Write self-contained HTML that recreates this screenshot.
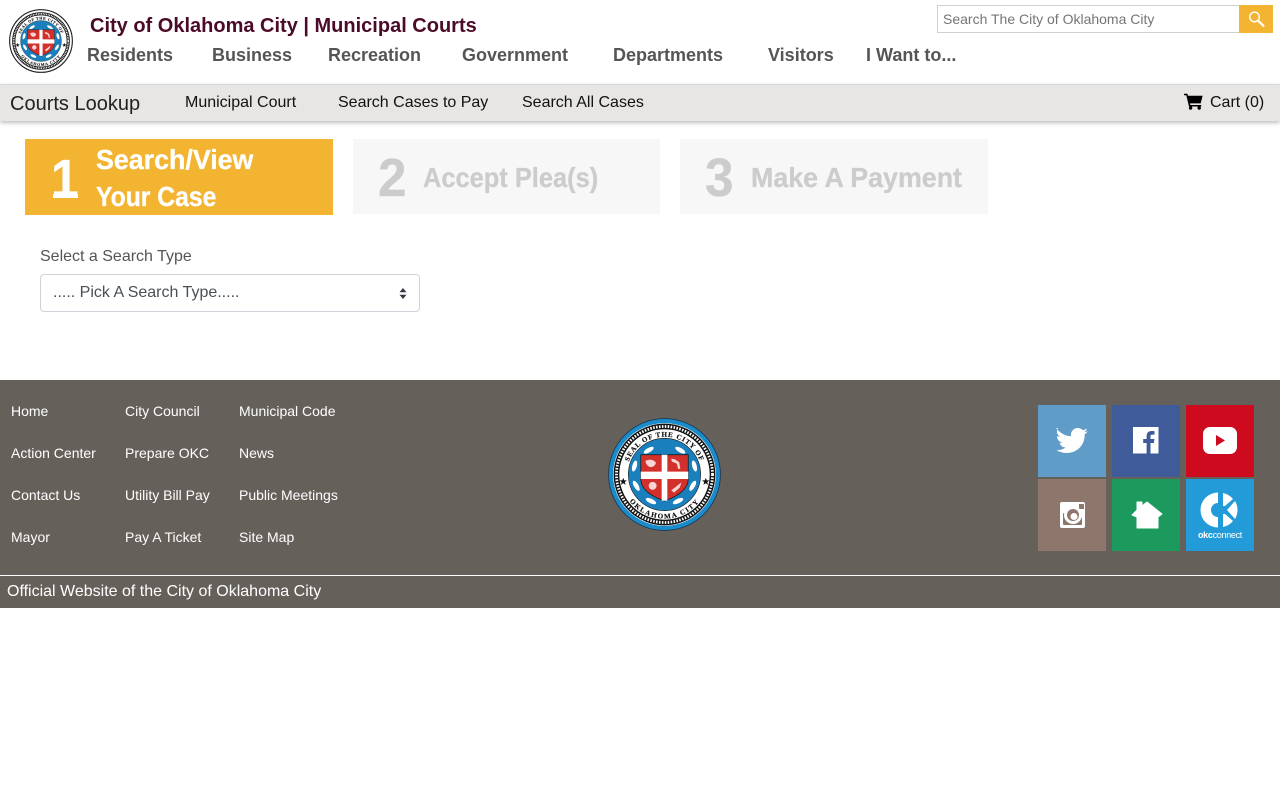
<!DOCTYPE html>
<html><head><meta charset="utf-8"><title>Municipal Courts</title>
<style>
html,body{margin:0;padding:0;background:#fff;width:1280px;height:800px;overflow:hidden;font-family:"Liberation Sans",Arial,sans-serif}
.a{position:absolute;white-space:nowrap}
.nav{top:44px;font-size:18px;font-weight:bold;color:#555;line-height:22px}
.sub{top:93px;font-size:16px;color:#111;line-height:19px}
.f{font-size:14px;color:#fff;line-height:16px}
.st{font-family:"Liberation Sans",sans-serif;font-weight:bold;transform-origin:0 0;-webkit-text-stroke:.3px currentColor}
.tile{position:absolute;width:68px;height:72px}
</style></head><body>
<svg width="0" height="0" style="position:absolute"><defs>
<g id="seal">
<circle cx="100" cy="100" r="91" fill="#fff"/>
<circle cx="100" cy="100" r="85" fill="none" stroke="#111" stroke-width="10"/>
<circle cx="100" cy="100" r="85" fill="none" stroke="#fff" stroke-width="5" stroke-dasharray="2.800 2.400"/>
<circle cx="100" cy="100" r="64" fill="#1a7fbd" stroke="#111" stroke-width="1"/>
<path id="sealTop" d="M33 100A67 67 0 0 1 167 100" fill="none"/>
<path id="sealBot" d="M22 100A78 78 0 0 0 178 100" fill="none"/>
<text font-family="Liberation Serif,serif" font-weight="bold" font-size="12.500" fill="#111" letter-spacing="1.500" stroke="#111" stroke-width=".3"><textPath href="#sealTop" startOffset="50%" text-anchor="middle">SEAL OF THE CITY OF</textPath></text>
<text font-family="Liberation Serif,serif" font-weight="bold" font-size="12.500" fill="#111" letter-spacing="2.500" stroke="#111" stroke-width=".3"><textPath href="#sealBot" startOffset="50%" text-anchor="middle">OKLAHOMA CITY</textPath></text>
<path d="M27 106l1.800 4.500h4.700l-3.800 3 1.500 4.800-4.200-2.800-4.200 2.800 1.500-4.800-3.800-3h4.700zM173 106l1.800 4.500h4.700l-3.800 3 1.500 4.800-4.200-2.800-4.200 2.800 1.500-4.800-3.800-3h4.700z" fill="#111"/>
<g fill="#fff"><ellipse cx="72" cy="57" rx="10" ry="4" transform="rotate(-30 72 57)"/><ellipse cx="128" cy="57" rx="10" ry="4" transform="rotate(30 128 57)"/><ellipse cx="47" cy="85" rx="10" ry="4" transform="rotate(-75 47 85)"/><ellipse cx="153" cy="85" rx="10" ry="4" transform="rotate(75 153 85)"/><ellipse cx="50" cy="120" rx="10" ry="4" transform="rotate(60 50 120)"/><ellipse cx="150" cy="120" rx="10" ry="4" transform="rotate(-60 150 120)"/><ellipse cx="76" cy="147" rx="10" ry="4" transform="rotate(25 76 147)"/><ellipse cx="124" cy="147" rx="10" ry="4" transform="rotate(-25 124 147)"/></g>
<path d="M58 65H142V108Q142 132 100 147Q58 132 58 108Z" fill="#d2302a" stroke="#111" stroke-width="1.200"/>
<path d="M95 65h10v30h37v13h-37v38.500h-10V108H58V95h37z" fill="#fff"/>
<path d="M66 76q11-6 19 3q-2 8-10 8q-7-2-9-11zM112 72l6 1 8 5 2 12h-4l-2-9-9-4zM72 120a7 7 0 1 0 14 0a7 7 0 1 0-14 0zM112 128l18-14-3 9-10 9z" fill="#fff" opacity=".8"/>
</g></defs></svg>

<!-- header -->
<svg class="a" style="left:9px;top:9px" width="64" height="64" viewBox="0 0 200 200"><circle cx="100" cy="100" r="98" fill="#fff" stroke="#222" stroke-width="3.500"/><use href="#seal"/></svg>
<div class="a" style="left:90px;top:14px;font-size:20px;font-weight:bold;color:#4b0a28;line-height:24px">City of Oklahoma City | Municipal Courts</div>
<div class="a nav" style="left:87px">Residents</div>
<div class="a nav" style="left:212px">Business</div>
<div class="a nav" style="left:328px">Recreation</div>
<div class="a nav" style="left:462px">Government</div>
<div class="a nav" style="left:613px">Departments</div>
<div class="a nav" style="left:768px">Visitors</div>
<div class="a nav" style="left:866px">I Want to...</div>

<div class="a" style="left:937px;top:5px;width:301px;height:26px;border:1px solid #d0d0d0;border-right:0;background:#fff"></div>
<div class="a" style="left:943px;top:11px;font-size:14px;line-height:16px;color:#757575">Search The City of Oklahoma City</div>
<div class="a" style="left:1239px;top:5px;width:34px;height:28px;background:#f3b431">
<svg width="34" height="28" viewBox="0 0 34 28"><circle cx="15.500" cy="12" r="4.800" fill="none" stroke="#fff" stroke-width="1.400"/><path d="M19.200 15.800l5.300 5" stroke="#fff" stroke-width="2.200" stroke-linecap="round"/></svg></div>

<!-- subnav -->
<div class="a" style="left:0;top:84px;width:1280px;height:37px;background:#e7e6e4;border-top:1px solid #d8d8d8;box-sizing:border-box;box-shadow:0 2px 4px rgba(0,0,0,.25)"></div>
<div class="a" style="left:10px;top:92px;font-size:20px;line-height:24px;color:#222">Courts Lookup</div>
<div class="a sub" style="left:185px">Municipal Court</div>
<div class="a sub" style="left:338px">Search Cases to Pay</div>
<div class="a sub" style="left:522px">Search All Cases</div>
<svg class="a" style="left:1184px;top:93px" width="19" height="17" viewBox="0 0 19 17"><path d="M0 .8h3.400l.6 2h14.600l-1.900 7.600H6l.4 1.600h10.800v1.500H5L2.300 2.300H0z" fill="#000"/><circle cx="6.600" cy="15" r="1.700" fill="#000"/><circle cx="15.200" cy="15" r="1.700" fill="#000"/></svg>
<div class="a sub" style="left:1210px">Cart (0)</div>

<!-- steps -->
<div class="a" style="left:25px;top:139px;width:308px;height:76px;background:#f3b431"></div>
<div class="a" style="left:353px;top:139px;width:307px;height:75px;background:#f7f7f7"></div>
<div class="a" style="left:680px;top:139px;width:308px;height:75px;background:#f7f7f7"></div>

<div class="a st" style="left:51px;top:148px;font-size:54px;line-height:62px;color:#fff;transform:scaleX(.92)">1</div>
<div class="a" style="left:53px;top:194px;width:25px;height:4px;background:#fff"></div>
<div class="a st" style="left:96px;top:144px;font-size:28px;line-height:32px;color:#fff;transform:scaleX(.957)">Search/View</div>
<div class="a st" style="left:96px;top:181px;font-size:28px;line-height:32px;color:#fff;transform:scaleX(.882)">Your Case</div>

<div class="a st" style="left:378px;top:147px;font-size:54px;line-height:62px;color:#ccc;transform:scaleX(.95)">2</div>
<div class="a st" style="left:423px;top:162px;font-size:28px;line-height:32px;color:#ccc;transform:scaleX(.908)">Accept Plea(s)</div>
<div class="a st" style="left:705px;top:147px;font-size:54px;line-height:62px;color:#ccc;transform:scaleX(.95)">3</div>
<div class="a st" style="left:751px;top:162px;font-size:28px;line-height:32px;color:#ccc;transform:scaleX(.957)">Make A Payment</div>

<!-- form -->
<div class="a" style="left:40px;top:247px;font-size:16px;line-height:19px;color:#555">Select a Search Type</div>
<div class="a" style="left:40px;top:274px;width:380px;height:38px;box-sizing:border-box;border:1px solid #ced4da;border-radius:4px;background:#fff"></div>
<div class="a" style="left:53px;top:283px;font-size:16px;line-height:19px;color:#495057">..... Pick A Search Type.....</div>
<svg class="a" style="left:399px;top:288px" width="8" height="11" viewBox="0 0 8 11"><path d="M4 0L7.500 4.300H.5zM4 11L.5 6.700h7z" fill="#343a40"/></svg>

<!-- footer -->
<div class="a" style="left:0;top:380px;width:1280px;height:228px;background:#66605b"></div>
<div class="a" style="left:0;top:575px;width:1280px;height:1px;background:#fff"></div>
<div class="a f" style="left:11px;top:403px">Home</div>
<div class="a f" style="left:11px;top:445px">Action Center</div>
<div class="a f" style="left:11px;top:487px">Contact Us</div>
<div class="a f" style="left:11px;top:529px">Mayor</div>
<div class="a f" style="left:125px;top:403px">City Council</div>
<div class="a f" style="left:125px;top:445px">Prepare OKC</div>
<div class="a f" style="left:125px;top:487px">Utility Bill Pay</div>
<div class="a f" style="left:125px;top:529px">Pay A Ticket</div>
<div class="a f" style="left:239px;top:403px">Municipal Code</div>
<div class="a f" style="left:239px;top:445px">News</div>
<div class="a f" style="left:239px;top:487px">Public Meetings</div>
<div class="a f" style="left:239px;top:529px">Site Map</div>
<div class="a" style="left:7px;top:582px;font-size:16px;line-height:19px;color:#fff">Official Website of the City of Oklahoma City</div>

<svg class="a" style="left:608px;top:418px" width="113" height="113" viewBox="0 0 200 200"><circle cx="100" cy="100" r="99" fill="#1a8ccb" stroke="#1b3a55" stroke-width="1.500"/><use href="#seal"/></svg>

<!-- social -->
<div class="tile" style="left:1038px;top:405px;background:#5f9cc7"><svg width="68" height="72" viewBox="0 0 68 72"><path d="M18 23c4 5 9 8 15 8.300-.8-4.500 2.500-8.300 6.800-8.300 2 0 3.700.8 5 2.200 1.500-.3 3-1 4.200-1.700-.5 1.500-1.500 2.800-2.800 3.600 1.300-.1 2.600-.5 3.600-1-.9 1.300-2 2.500-3.200 3.400C47 41 38 48 29 48c-4 0-7.500-1-10.500-3 3.500.4 6.500-.5 9-2.500-3 0-5-2-6-4.500 1 .2 2 .1 3-.1-3.300-.8-5.500-3.500-5.500-7 1 .5 2 .8 3 .8-3-2-4-5.700-2-8.700z" fill="#fff"/></svg></div>
<div class="tile" style="left:1112px;top:405px;background:#3f5b9a"><svg width="68" height="72" viewBox="0 0 68 72"><path d="M21 22h25.500v26.500H38.500V38h3.400l.5-4h-3.900v-2.500c0-1.200.4-1.900 2-1.900h2v-3.500c-.4 0-1.600-.1-2.900-.1-3 0-5 1.800-5 5.100V34h-3.400v4h3.400v10.500H21z" fill="#fff"/></svg></div>
<div class="tile" style="left:1186px;top:405px;background:#ce0a1e"><svg width="68" height="72" viewBox="0 0 68 72"><rect x="17" y="22" width="34" height="27" rx="7" fill="#fff"/><path d="M30 30l9 5.500-9 5.500z" fill="#ce0a1e"/></svg></div>
<div class="tile" style="left:1038px;top:479px;background:#8d766c"><svg width="68" height="72" viewBox="0 0 68 72"><rect x="22" y="23" width="25" height="26" rx="2" fill="#fff"/><rect x="25" y="34" width="19" height="12" rx="1" fill="#8d766c"/><rect x="41" y="25" width="5" height="5" fill="#8d766c"/><circle cx="35" cy="36" r="9" fill="#fff"/><circle cx="35" cy="36" r="6" fill="#8d766c"/><circle cx="36" cy="37.500" r="3.500" fill="#fff"/></svg></div>
<div class="tile" style="left:1112px;top:479px;background:#1c9a5e"><svg width="68" height="72" viewBox="0 0 68 72"><path d="M20 36L25 31V23H30V27L35 23L50 35L46 38V49H25V38Z" fill="#fff" stroke="#fff" stroke-width="1" stroke-linejoin="round"/></svg></div>
<div class="tile" style="left:1186px;top:479px;background:#239bd8"><svg width="68" height="72" viewBox="0 0 68 72"><path d="M32 13.500A17.500 17.500 0 0 0 32 48.500V38A7 7 0 0 1 32 24Z" fill="#fff"/><path d="M37 14A17.500 17.500 0 0 1 47 20L39 27H37ZM49 22A17.500 17.500 0 0 1 49 40L41 31ZM37 48A17.500 17.500 0 0 0 47 42L39 35H37Z" fill="#fff"/><text x="34" y="59" text-anchor="middle" font-size="9" fill="#fff" font-family="Liberation Sans,sans-serif" letter-spacing="-.3"><tspan font-weight="bold">okc</tspan>connect</text></svg></div>
</body></html>
